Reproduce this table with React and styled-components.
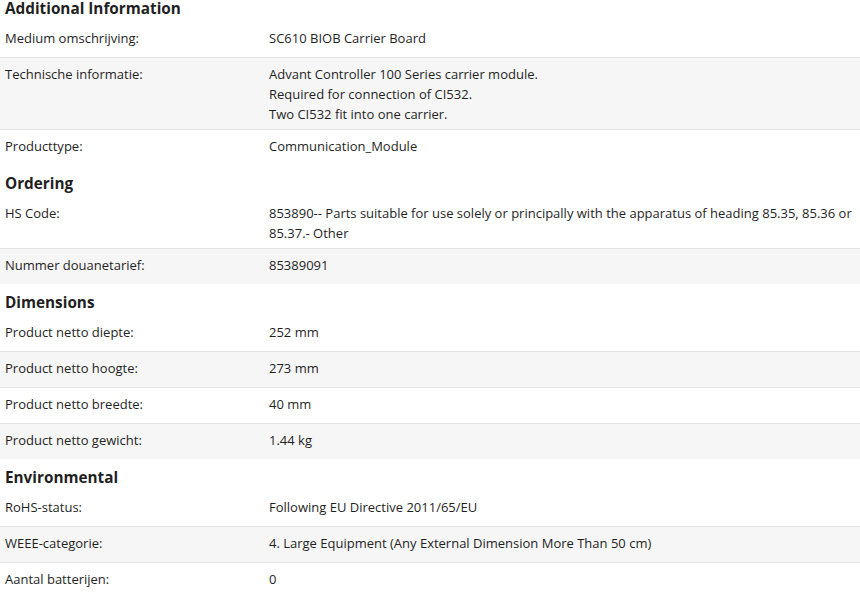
import React from 'react';
import styled, {createGlobalStyle} from 'styled-components';

const Global = createGlobalStyle`
  body {
    margin: 0;
    background: #fff;
    font-family: "Open Sans", "Liberation Sans", sans-serif;
    color: #1f1f1f;
  }
`;

const sections = [
  {
    title: 'Additional Information',
    rows: [
      ['Medium omschrijving:', ['SC610 BIOB Carrier Board']],
      ['Technische informatie:', [
        'Advant Controller 100 Series carrier module.',
        'Required for connection of CI532.',
        'Two CI532 fit into one carrier.',
      ]],
      ['Producttype:', ['Communication_Module']],
    ],
  },
  {
    title: 'Ordering',
    rows: [
      ['HS Code:', [
        '853890-- Parts suitable for use solely or principally with the apparatus of heading 85.35, 85.36 or',
        '85.37.- Other',
      ]],
      ['Nummer douanetarief:', ['85389091']],
    ],
  },
  {
    title: 'Dimensions',
    rows: [
      ['Product netto diepte:', ['252 mm']],
      ['Product netto hoogte:', ['273 mm']],
      ['Product netto breedte:', ['40 mm']],
      ['Product netto gewicht:', ['1.44 kg']],
    ],
  },
  {
    title: 'Environmental',
    rows: [
      ['RoHS-status:', ['Following EU Directive 2011/65/EU']],
      ['WEEE-categorie:', ['4. Large Equipment (Any External Dimension More Than 50 cm)']],
      ['Aantal batterijen:', ['0']],
    ],
  },
];

const Page = styled.div`
  width: 860px;
  margin-top: -10px;
`;

const Heading = styled.h3`
  margin: 0;
  padding: 7px 5px 3px;
  font-size: 15.3px;
  font-weight: 700;
  line-height: 22px;
  color: #1f1f1f;
`;

const Table = styled.div`
  display: flex;
  flex-direction: column;
`;

const Row = styled.div`
  display: grid;
  grid-template-columns: 264px 1fr;
  box-sizing: border-box;
  min-height: 36px;
  padding: 6px 0 5px;
  border-bottom: 1px solid #e3e3e3;
  font-size: 13px;
  line-height: 20px;

  &:nth-child(even) {
    background: #f6f6f6;
  }

  &:last-child {
    border-bottom: none;
    min-height: 35px;
  }
`;

const Label = styled.div`
  padding: 0 5px;
`;

const Value = styled.div`
  padding: 0 5px;
  white-space: nowrap;
`;

const App = () => (
  <Page>
    <Global />
    {sections.map((section) => (
      <section key={section.title}>
        <Heading>{section.title}</Heading>
        <Table>
          {section.rows.map(([label, lines]) => (
            <Row key={label}>
              <Label>{label}</Label>
              <Value>
                {lines.map((line) => (
                  <div key={line}>{line}</div>
                ))}
              </Value>
            </Row>
          ))}
        </Table>
      </section>
    ))}
  </Page>
);

export default App;
